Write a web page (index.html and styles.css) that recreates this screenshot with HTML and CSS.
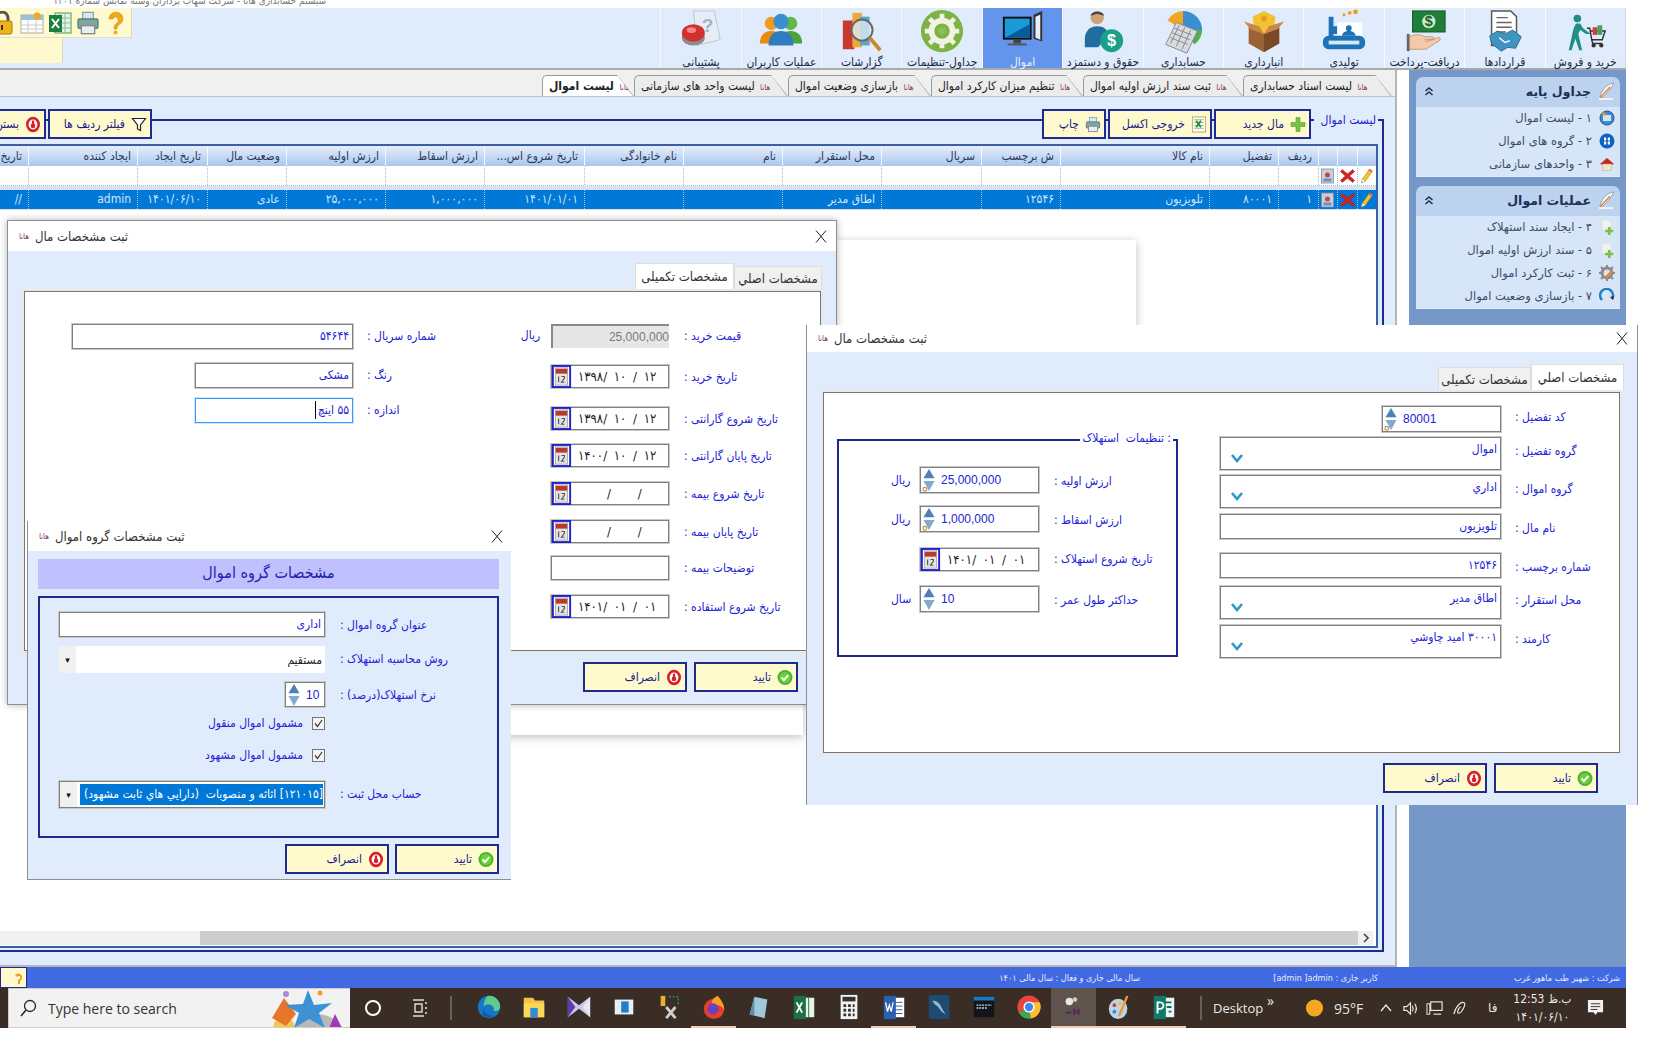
FILE: index.html
```html
<!DOCTYPE html>
<html lang="fa">
<head>
<meta charset="utf-8">
<title>سیستم حسابداری هانا</title>
<link rel="stylesheet" href="styles.css">
</head>
<body>
<svg class="defs" xmlns="http://www.w3.org/2000/svg">
  <symbol id="cal" viewBox="0 0 20 24"><rect x="1" y="1" width="18" height="22" fill="#fff" stroke="#2222cc" stroke-width="2"/><rect x="3.5" y="3" width="13" height="18" fill="#e4e4e4" stroke="#888" stroke-width=".6"/><rect x="4" y="4" width="12" height="5" fill="#b83a2a"/><path d="M7 12v6M10 12h3v2l-3 4h3" stroke="#555" stroke-width="1.2" fill="none"/></symbol>
  <symbol id="spin" viewBox="0 0 14 26"><path d="M7 1l6 10H1z" fill="#4f7fb8"/><path d="M1 14h12L7 25z" fill="#86a9cf"/></symbol>
  <symbol id="spino" viewBox="0 0 14 26"><path d="M7 1l6 10H1z" fill="#4f7fb8"/><path d="M1 14h12L7 25z" fill="#86a9cf"/><circle cx="2.500" cy="23" r="2" fill="#fff" stroke="#c08a3a" stroke-width="1.200"/></symbol>
  <symbol id="ok" viewBox="0 0 16 16"><circle cx="8" cy="8" r="7.5" fill="#49b52d"/><circle cx="8" cy="8" r="5.5" fill="#6fce3e"/><path d="M4.5 8l2.4 2.6 4.4-5" stroke="#fff" stroke-width="2" fill="none"/></symbol>
  <symbol id="no" viewBox="0 0 16 16"><ellipse cx="8" cy="8" rx="7" ry="7.8" fill="#d6202a"/><ellipse cx="8" cy="8" rx="4.4" ry="5" fill="#fff"/><path d="M8 4v4" stroke="#d6202a" stroke-width="2.2"/><circle cx="8" cy="9.4" r="2.3" fill="#d6202a"/></symbol>
  <symbol id="plus" viewBox="0 0 16 16"><path d="M6 1h4v5h5v4h-5v5H6v-5H1V6h5z" fill="#7ac143" stroke="#5a9c2a" stroke-width=".6"/></symbol>
  <symbol id="xls" viewBox="0 0 16 18"><rect x="1" y="1" width="14" height="16" fill="#fdfbe8" stroke="#b7a97a"/><path d="M3 4h10M3 7h10M3 10h10M3 13h10" stroke="#8fb78f"/><path d="M5 5l5 7M10 5l-5 7" stroke="#1f8a3c" stroke-width="1.8"/></symbol>
  <symbol id="prn" viewBox="0 0 18 18"><rect x="5" y="1" width="8" height="6" fill="#dce6f0" stroke="#8aa"/><rect x="1.500" y="6" width="15" height="7" rx="1" fill="#7fa7a0" stroke="#5a8078"/><rect x="4" y="11" width="10" height="6" fill="#e9eef2" stroke="#889"/></symbol>
  <symbol id="funnel" viewBox="0 0 16 16"><path d="M1.500 2h13L9.500 8.500V14l-3-1.500v-4z" fill="#fff" stroke="#222" stroke-width="1.200"/></symbol>
  <symbol id="pen" viewBox="0 0 14 16"><path d="M10 1l3 2-7 10-4 2 1-4z" fill="#f4c430" stroke="#b88a10" stroke-width=".6"/><path d="M2 15l1-4 3 2z" fill="#fff" stroke="#888" stroke-width=".4"/><path d="M10 1l3 2-1 1.500-3-2z" fill="#e2704a"/></symbol>
  <symbol id="redx" viewBox="0 0 14 14"><path d="M2 1l5 4 5-4 1.500 2L9 7l4.500 4L12 13 7 9l-5 4-1.500-2L5 7 .5 3z" fill="#d8201f" stroke="#901010" stroke-width=".4"/></symbol>
  <symbol id="thumb" viewBox="0 0 14 16"><rect x="1" y="1" width="12" height="14" fill="#c7cfdc" stroke="#7f8aa0" stroke-width=".8"/><circle cx="7" cy="7" r="2.500" fill="#c9473d"/><rect x="3" y="10.500" width="8" height="3" fill="#6e8fc0"/></symbol>
  <symbol id="chev" viewBox="0 0 14 12"><path d="M2 3l5 6 5-6" stroke="#2c97c9" stroke-width="2.600" fill="none"/></symbol>
  <symbol id="feather" viewBox="0 0 18 18"><path d="M17 1C9 2 5 8 3 15l2 1C9 12 14 7 17 1z" fill="#f8f8f4" stroke="#8a94a8" stroke-width=".8"/><path d="M13 5L3 16" stroke="#d88a3a" stroke-width="1.400"/><path d="M2 17h14" stroke="#fff" stroke-width="1.500"/></symbol>
  <symbol id="dbl" viewBox="0 0 10 10"><path d="M1.500 5l3.500-3 3.500 3M1.500 9l3.500-3 3.500 3" stroke="#1d2f55" stroke-width="1.500" fill="none"/></symbol>
  <symbol id="docplus" viewBox="0 0 18 18"><path d="M3 1h8l3 3v9H3z" fill="#f0f0f0" stroke="#ddd"/><path d="M10 9h3v3h3v3h-3v3h-3v-3H7v-3h3z" fill="#7ac143"/></symbol>
</svg>

<div class="app">
  <div class="apptitle">سیستم حسابداری هانا - شرکت شهاب پردازان وسته نمایش شماره ۱۴۰۱</div>

  <header class="toolbar">
    <div class="quick">
      <div class="quick-top">
        <svg class="q lock" viewBox="0 0 22 24"><path d="M5 11V7a6 6 0 0 1 12 0v4" fill="none" stroke="#555" stroke-width="3"/><rect x="1" y="10" width="20" height="13" rx="2" fill="#f0b418" stroke="#a87a10"/><rect x="10" y="14" width="2" height="5" fill="#333"/></svg>
        <svg class="q" viewBox="0 0 24 22"><rect x="1" y="3" width="22" height="18" fill="#fff" stroke="#aaa"/><rect x="1" y="3" width="22" height="5" fill="#9dc0d8"/><path d="M1 13h22M1 17h22M8 8v13M16 8v13" stroke="#ccc"/><circle cx="17" cy="4" r="3.500" fill="#f5a623"/></svg>
        <svg class="q" viewBox="0 0 24 24"><rect x="7" y="2" width="16" height="20" fill="#e8f3e8" stroke="#4a9a5a"/><path d="M12 2v20M17 2v20M7 7h16M7 12h16M7 17h16" stroke="#86c196"/><rect x="1" y="4" width="13" height="17" fill="#1f7f3f"/><path d="M4 8l7 9M11 8l-7 9" stroke="#fff" stroke-width="2"/></svg>
        <svg class="q" viewBox="0 0 18 18"><use href="#prn"/></svg>
        <svg class="q" viewBox="0 0 20 24"><path d="M3 8a7 6.500 0 1 1 11 5c-2 1.500-3 2.500-3 5H8c0-4 1.500-5 3.500-6.500C13 10 12 6 9.500 6 8 6 7 7 7 8z" fill="#f2a81d" stroke="#c58410" stroke-width=".5"/><circle cx="9.500" cy="21.500" r="2" fill="#f2a81d"/></svg>
      </div>
      <div class="quick-sub"></div>
    </div>
    <nav class="tools">
      <a class="tool"><svg class="ticon" viewBox="0 0 48 48"><circle cx="16" cy="10" r="4" fill="#1f8f83"/><path d="M15 15c-3 3-4 10-5 15l-3 13h3l4-12 4 12h3l-4-17 2-4 6 4h5l-8-6-3-5z" fill="#1f8f83"/><path d="M26 20h3l2 12h11l3-9H30" fill="none" stroke="#333" stroke-width="1.500"/><rect x="32" y="19" width="5" height="8" fill="#c8423a"/><rect x="37" y="17" width="5" height="10" fill="#45a35a"/><circle cx="33" cy="38" r="2.200" fill="#333"/><circle cx="41" cy="38" r="2.200" fill="#333"/><path d="M31 32l1 4h10" fill="none" stroke="#333" stroke-width="1.500"/></svg><span>خرید و فروش</span></a>
      <a class="tool"><svg class="ticon" viewBox="0 0 48 48"><path d="M10 2h20l6 6v30H10z" fill="#fff" stroke="#555" stroke-width="1.500"/><path d="M15 9h12M15 14h16M15 19h16M15 24h10" stroke="#666" stroke-width="1.500"/><path d="M8 28l8-5 8 3 8-4 9 7-6 12-8-1-7 4-10-8z" fill="#3f94c0" stroke="#2a6d95"/><path d="M18 30l6 5 5-2" stroke="#fff" stroke-width="1.500" fill="none"/></svg><span>قراردادها</span></a>
      <a class="tool"><svg class="ticon" viewBox="0 0 48 48"><rect x="11" y="2" width="34" height="22" fill="#1f7f3a" stroke="#0f5a25"/><circle cx="28" cy="13" r="7" fill="#cfe8c8"/><text class="dollar" x="28" y="18">$</text><path d="M5 26h3v18H5z" fill="#666"/><path d="M8 29c6-3 11-3 16 0h8c2 0 2 3 0 3h-8l1 2 12-4c3-1 4 2 2 3l-14 9H8z" fill="#f3c9a8" stroke="#b98a68" stroke-width=".8"/></svg><span>دریافت-پرداخت</span></a>
      <a class="tool"><svg class="ticon" viewBox="0 0 48 48"><circle cx="30" cy="4" r="2" fill="#e8a020"/><circle cx="36" cy="3" r="2.500" fill="#e8a020"/><circle cx="24" cy="6" r="1.600" fill="#e8a020"/><path d="M8 8h5v24H8zM13 18h4v8h-4z" fill="#1d72b8"/><rect x="17" y="14" width="26" height="14" fill="#fff"/><circle cx="29" cy="20" r="3" fill="#1d72b8"/><path d="M22 28c0-3 3-5 7-5s7 2 7 5z" fill="#1d72b8"/><rect x="2" y="28" width="44" height="14" rx="6" fill="#1d72b8"/><rect x="8" y="33" width="32" height="4" fill="#d7e8f5"/></svg><span>تولیدی</span></a>
      <a class="tool"><svg class="ticon" viewBox="0 0 48 48"><path d="M8 18l16 7v20L8 36z" fill="#9a6236"/><path d="M40 18l-16 7v20l16-9z" fill="#7a4a26"/><path d="M12 8l12-6 12 6-2 14-10 4-10-4z" fill="#f2c230"/><path d="M3 13l7 8 14 5-5-8zM45 13l-7 8-14 5 5-8z" fill="#c9894c"/><circle cx="24" cy="10" r="3" fill="#e69a20"/></svg><span>انبارداری</span></a>
      <a class="tool"><svg class="ticon" viewBox="0 0 48 48"><path d="M24 2a20 20 0 0 1 20 20H24z" fill="#3a8fd0"/><path d="M24 2A20 20 0 0 0 8 12l16 10z" fill="#f2a51e"/><path d="M44 22a20 20 0 0 1-8 15L24 22z" fill="#4fb04f"/><path d="M17 14l22 9-11 23-22-9z" fill="#d8dadf" stroke="#888"/><path d="M15 20l18 7M13 25l18 7M11 30l18 7M20 17l-9 19M26 19l-9 20M32 22l-9 20" stroke="#888"/></svg><span>حسابداری</span></a>
      <a class="tool"><svg class="ticon" viewBox="0 0 48 48"><circle cx="18" cy="9" r="7" fill="#d0a278"/><path d="M11 7c1-5 13-6 14 0l-7-2z" fill="#444"/><path d="M5 32c0-9 5-14 13-14s11 4 11 10l-10 12H5z" fill="#1f6e9f"/><circle cx="33" cy="33" r="12" fill="#18a08a"/><text class="dollar wh" x="33" y="38.500">$</text></svg><span>حقوق و دستمزد</span></a>
      <a class="tool on"><svg class="ticon" viewBox="0 0 48 48"><rect x="3" y="8" width="30" height="24" fill="#111"/><rect x="5" y="10" width="26" height="20" fill="#1a9bd8"/><path d="M5 30l26-14v14z" fill="#0b5a9a"/><path d="M35 6l9-4v32l-9-3z" fill="#333"/><path d="M37 8l5-2v26l-5-2z" fill="#e8eef4"/><rect x="14" y="32" width="8" height="4" fill="#444"/><rect x="8" y="36" width="20" height="2" fill="#555"/></svg><span>اموال</span></a>
      <a class="tool"><svg class="ticon" viewBox="0 0 48 48"><circle cx="24" cy="23" r="22" fill="#7cb342"/><circle cx="24" cy="23" r="11" fill="none" stroke="#f2f2e4" stroke-width="6"/><path d="M24 5v6M24 35v6M6 23h6M36 23h6M11 10l4 4M33 32l4 4M37 10l-4 4M15 32l-4 4" stroke="#f2f2e4" stroke-width="5"/><circle cx="24" cy="23" r="4" fill="#8dbf58"/></svg><span>جداول-تنظیمات</span></a>
      <a class="tool"><svg class="ticon" viewBox="0 0 48 48"><rect x="4" y="12" width="12" height="30" fill="#c8382e"/><rect x="14" y="4" width="10" height="36" fill="#f0a83a"/><rect x="22" y="8" width="10" height="30" fill="#5aa6c8"/><circle cx="24" cy="22" r="11" fill="#dce9f4" fill-opacity=".8" stroke="#666" stroke-width="2"/><path d="M32 30l11 13" stroke="#c9882e" stroke-width="4"/></svg><span>گزارشات</span></a>
      <a class="tool"><svg class="ticon" viewBox="0 0 48 48"><circle cx="14" cy="15" r="7" fill="#f09a20"/><path d="M2 36c0-9 5-13 12-13s12 4 12 13z" fill="#e88a10"/><circle cx="34" cy="15" r="7" fill="#5fb84a"/><path d="M22 36c0-9 5-13 12-13s12 4 12 13z" fill="#4aa438"/><circle cx="24" cy="13" r="8" fill="#3a8fd0"/><path d="M11 38c0-11 6-15 13-15s13 4 13 15z" fill="#2f7cc0"/></svg><span>عملیات کاربران</span></a>
      <a class="tool"><svg class="ticon" viewBox="0 0 48 48"><path d="M16 2h22l6 30-24 6z" fill="#e6edf4" stroke="#b9c6d4"/><text class="qmark" x="31" y="24">?</text><ellipse cx="16" cy="30" rx="12" ry="8" fill="#8d8d8d"/><ellipse cx="16" cy="25" rx="12" ry="9" fill="#d32f2f"/><ellipse cx="14" cy="22" rx="5" ry="3" fill="#f08a80"/></svg><span>پشتیبانی</span></a>
    </nav>
  </header>

  <div class="workspace">
    <main class="main">
      <div class="tabstrip">
        <div class="tab"><span class="mini">هانا</span> لیست اسناد حسابداری</div>
        <div class="tab"><span class="mini">هانا</span> ثبت سند ارزش اولیه اموال</div>
        <div class="tab"><span class="mini">هانا</span> تنظیم میزان کارکرد اموال</div>
        <div class="tab"><span class="mini">هانا</span> بازسازی وضعیت اموال</div>
        <div class="tab"><span class="mini">هانا</span> لیست واحد های سازمانی</div>
        <div class="tab active"><span class="mini">هانا</span> لیست اموال</div>
      </div>
      <div class="content">
        <section class="group">
          <div class="actions">
            <span class="legend">لیست اموال</span>
            <button class="btn b-new"><svg class="bi"><use href="#plus"/></svg>مال جدید</button>
            <button class="btn b-xls"><svg class="bi"><use href="#xls"/></svg>خروجی اکسل</button>
            <button class="btn b-prn"><svg class="bi"><use href="#prn"/></svg>چاپ</button>
            <span class="grow"></span>
            <button class="btn b-flt"><svg class="bi"><use href="#funnel"/></svg>فیلتر ردیف ها</button>
            <button class="btn b-cls"><svg class="bi"><use href="#no"/></svg>بستن</button>
          </div>
          <div class="grid">
            <div class="row head">
              <i></i><i></i><i></i><i>ردیف</i><i>تفضیل</i><i>نام کالا</i><i>ش برچسب</i><i>سریال</i><i>محل استقرار</i><i>نام</i><i>نام خانوادگی</i><i>تاریخ شروع اس...</i><i>ارزش اسقاط</i><i>ارزش اولیه</i><i>وضعیت مال</i><i>تاریخ ایجاد</i><i>ایجاد کننده</i><i>تاریخ</i>
            </div>
            <div class="row filter">
              <i><svg class="ri"><use href="#pen"/></svg></i><i><svg class="ri"><use href="#redx"/></svg></i><i><svg class="ri"><use href="#thumb"/></svg></i><i></i><i></i><i></i><i></i><i></i><i></i><i></i><i></i><i></i><i></i><i></i><i></i><i></i><i></i><i></i>
            </div>
            <div class="rowgap"></div>
            <div class="row sel">
              <i><svg class="ri"><use href="#pen"/></svg></i><i><svg class="ri"><use href="#redx"/></svg></i><i><svg class="ri"><use href="#thumb"/></svg></i><i>۱</i><i>۸۰۰۰۱</i><i>تلویزیون</i><i>۱۲۵۴۶</i><i></i><i>اطاق مدیر</i><i></i><i></i><i>۱۴۰۱/۰۱/۰۱</i><i>۱,۰۰۰,۰۰۰</i><i>۲۵,۰۰۰,۰۰۰</i><i>عادی</i><i>۱۴۰۱/۰۶/۱۰</i><i>admin</i><i>//</i>
            </div>
            <div class="gridfill"></div>
            <div class="hscroll">
              <span class="sb-track"></span><span class="sb-thumb"></span>
              <span class="sb-arrow"><svg viewBox="0 0 8 10" class="sb-ic"><path d="M2 1l4 4-4 4" fill="none" stroke="#444" stroke-width="1.600"/></svg></span>
            </div>
          </div>
        </section>
      </div>
    </main>

    <aside class="side">
      <section class="sp">
        <h3 class="sp-h"><svg class="sp-f"><use href="#feather"/></svg><span>جداول پایه</span><svg class="sp-d"><use href="#dbl"/></svg></h3>
        <ul class="sp-b">
          <li><svg class="sp-i" viewBox="0 0 16 16"><circle cx="8" cy="8" r="7" fill="#3c8bd0" stroke="#234f88"/><rect x="4" y="5" width="8" height="6" fill="#cfe6f8"/><path d="M3 3l4 2" stroke="#e8a020" stroke-width="2"/></svg>۱ - لیست اموال</li>
          <li><svg class="sp-i" viewBox="0 0 16 16"><circle cx="8" cy="8" r="7.500" fill="#0a63c4"/><rect x="5" y="4.500" width="2.200" height="3" fill="#fff"/><rect x="8.800" y="4.500" width="2.200" height="3" fill="#fff"/><rect x="5" y="8.500" width="2.200" height="3" fill="#fff"/><rect x="8.800" y="8.500" width="2.200" height="3" fill="#fff"/></svg>۲ - گروه های اموال</li>
          <li><svg class="sp-i" viewBox="0 0 16 16"><path d="M1 8l7-6 7 6-3 1H4z" fill="#c8281f"/><rect x="3.500" y="8" width="9" height="6.500" fill="#f2e4c4" stroke="#aa9" stroke-width=".5"/></svg>۳ - واحدهای سازمانی</li>
        </ul>
      </section>
      <section class="sp">
        <h3 class="sp-h"><svg class="sp-f"><use href="#feather"/></svg><span>عملیات اموال</span><svg class="sp-d"><use href="#dbl"/></svg></h3>
        <ul class="sp-b">
          <li><svg class="sp-i"><use href="#docplus"/></svg>۴ - ایجاد سند استهلاک</li>
          <li><svg class="sp-i"><use href="#docplus"/></svg>۵ - سند ارزش اولیه اموال</li>
          <li><svg class="sp-i" viewBox="0 0 16 16"><circle cx="8" cy="8" r="5" fill="none" stroke="#8a8a8a" stroke-width="3"/><path d="M8 0v3M8 13v3M0 8h3M13 8h3M2 2l2 2M12 12l2 2M14 2l-2 2M4 12l-2 2" stroke="#8a8a8a" stroke-width="2"/><path d="M6 12l6-7 2 1-6 8z" fill="#e8852a"/></svg>۶ - ثبت کارکرد اموال</li>
          <li><svg class="sp-i" viewBox="0 0 16 16"><path d="M3 12A6.500 6.500 0 1 1 13 11" fill="none" stroke="#1d7fbf" stroke-width="2.400"/><path d="M11 9l3 3 1-4z" fill="#333"/></svg>۷ - بازسازی وضعیت اموال</li>
        </ul>
      </section>
    </aside>
  </div>

  <footer class="status">
    <span class="st-btn"><svg viewBox="0 0 14 14" class="st-ic"><path d="M3 4a4 4 0 1 1 5 6v3H6V9c3-1 3-4 1-4-1 0-2 .5-2 1z" fill="#f0a020"/></svg></span>
    <span class="st st-year">سال مالی جاری و فعال : سال مالی ۱۴۰۱</span>
    <span class="st st-user">کاربر جاری : admin ]admin]</span>
    <span class="st st-co">شرکت : شهیر طب ماهور غرب</span>
  </footer>

  <div class="taskbar">
    <div class="search">
      <svg class="mag" viewBox="0 0 18 18"><circle cx="11" cy="7" r="5.500" fill="none" stroke="#222" stroke-width="1.300"/><path d="M7 11l-5 6" stroke="#222" stroke-width="1.500"/></svg>
      <span class="s-text">Type here to search</span>
      <svg class="star" viewBox="0 4 80 40"><circle cx="14" cy="44" r="11" fill="#f2c84a"/><path d="M2 34l12-20 12 16-10 12z" fill="#e8752a"/><ellipse cx="46" cy="40" rx="20" ry="10" fill="#b8b8b8"/><path d="M38 6l6 15 18-2-13 10 6 15-16-9-15 9 5-15-14-8 18-1z" fill="#3c92d4"/><circle cx="50" cy="9" r="2.500" fill="#f2a020"/><circle cx="16" cy="10" r="3" fill="#a888e0"/><path d="M60 42l5-12 6 12 3 4H60z" fill="#a038b8"/></svg>
    </div>
    <span class="tb-sys tb-c"><svg viewBox="0 0 20 20" class="ti"><circle cx="10" cy="10" r="7" fill="none" stroke="#fff" stroke-width="2"/></svg></span>
    <span class="tb-sys tb-v"><svg viewBox="0 0 20 20" class="ti"><path d="M3 2h11M3 18h11M5 6h7v8H5z" fill="none" stroke="#ddd" stroke-width="1.400"/><path d="M16 4v2M16 9v2M16 14v2" stroke="#ddd" stroke-width="1.600"/></svg></span>
    <span class="tb-sep"></span>
    <span class="tb-i"><svg viewBox="0 0 28 28" class="ti2"><circle cx="14" cy="14" r="12" fill="#1477c8"/><path d="M14 2a12 12 0 0 1 12 12c0 4-4 5-7 4 2-6-6-9-11-5 1-6 3-11 6-11z" fill="#5ecb8a"/><path d="M8 14c0 6 5 10 11 9-3 3-9 3-12-1" fill="#0e5ca8"/></svg></span>
    <span class="tb-i"><svg viewBox="0 0 28 28" class="ti2"><path d="M3 4h10l2 3h10v18H3z" fill="#f5c542"/><rect x="3" y="10" width="22" height="15" fill="#fbd75b"/><rect x="10" y="15" width="8" height="10" fill="#2a8fd8"/></svg></span>
    <span class="tb-i"><svg viewBox="0 0 28 28" class="ti2"><path d="M2 3l12 9 12-9v22l-12-9-12 9z" fill="#c9c9e8"/><path d="M2 3l8 11-8 11z" fill="#5b3bb0"/><path d="M26 3l-8 11 8 11z" fill="#e8e8f4"/></svg></span>
    <span class="tb-i"><svg viewBox="0 0 28 28" class="ti2"><rect x="4" y="6" width="20" height="16" fill="#e9eef2"/><rect x="11" y="8" width="8" height="12" fill="#1b7fd0"/></svg></span>
    <span class="tb-i"><svg viewBox="0 0 28 28" class="ti2"><rect x="5" y="2" width="5" height="11" fill="#e8b030"/><path d="M14 3h10v10" fill="none" stroke="#2e9a4a" stroke-dasharray="2 2" stroke-width="1.600"/><path d="M11 14l10 12M21 14l-10 12" stroke="#cfcfcf" stroke-width="3"/></svg></span>
    <span class="tb-i run"><svg viewBox="0 0 28 28" class="ti2"><circle cx="14" cy="16" r="11" fill="#e6402a"/><path d="M18 2c5 6 7 10 7 15-3-5-8-6-11-4-4-2-3-8 4-11z" fill="#f5a023"/><circle cx="13" cy="16" r="6" fill="#6d3fc4"/></svg></span>
    <span class="tb-i"><svg viewBox="0 0 28 28" class="ti2"><path d="M9 3l14 3-3 20-16-4z" fill="#9fc8d8"/><path d="M9 3L4 22l5 1z" fill="#5d8fa8"/></svg></span>
    <span class="tb-i"><svg viewBox="0 0 28 28" class="ti2"><rect x="10" y="4" width="15" height="21" fill="#e8f3ec"/><path d="M14 4v21M19 4v21" stroke="#217346"/><rect x="3" y="2" width="13" height="25" fill="#1d7044"/><path d="M6 9l6 11M12 9L6 20" stroke="#fff" stroke-width="2"/></svg></span>
    <span class="tb-i"><svg viewBox="0 0 28 28" class="ti2"><rect x="5" y="1" width="18" height="26" fill="#f4f4f4"/><rect x="7" y="3" width="14" height="5" fill="#333"/><path d="M8 11h3v3H8zM13 11h3v3h-3zM18 11h2v3h-2zM8 16h3v3H8zM13 16h3v3h-3zM18 16h2v3h-2zM8 21h3v3H8zM13 21h3v3h-3zM18 21h2v3h-2z" fill="#333"/></svg></span>
    <span class="tb-i run"><svg viewBox="0 0 28 28" class="ti2"><rect x="10" y="4" width="15" height="21" fill="#fff"/><path d="M13 9h10M13 13h10M13 17h10M13 21h10" stroke="#2b5797"/><rect x="3" y="2" width="13" height="25" fill="#2b5fad"/><path d="M5 9l2 10 2-7 2 7 2-10" fill="none" stroke="#fff" stroke-width="1.400"/></svg></span>
    <span class="tb-i"><svg viewBox="0 0 28 28" class="ti2"><rect x="3" y="1" width="22" height="26" rx="2" fill="#1f4a72"/><path d="M7 7c5 0 8 3 10 8l4 7c-4-2-6-5-8-8-2-2-5-3-6-7z" fill="#8fb7d2"/></svg></span>
    <span class="tb-i"><svg viewBox="0 0 28 28" class="ti2"><rect x="3" y="3" width="22" height="22" fill="#11161c"/><rect x="3" y="3" width="22" height="4" fill="#1c78c4"/><path d="M6 12h16M6 15h12" stroke="#d8d8d8" stroke-width="1.500" stroke-dasharray="2 1"/></svg></span>
    <span class="tb-i"><svg viewBox="0 0 28 28" class="ti2"><circle cx="14" cy="14" r="12.500" fill="#e8453c"/><path d="M14 14L3 20a12.500 12.500 0 0 0 13 6.300z" fill="#3aa757"/><path d="M14 14l2 12.300A12.500 12.500 0 0 0 25.500 9H14z" fill="#fbc02d"/><circle cx="14" cy="14" r="6" fill="#fff"/><circle cx="14" cy="14" r="4.500" fill="#4285f4"/></svg></span>
    <span class="tb-i run hl"><svg viewBox="0 0 28 28" class="ti2"><circle cx="9" cy="8" r="4" fill="#e8e8e8"/><circle cx="15" cy="6" r="2.500" fill="#d8c8a8"/><path d="M5 20h6M14 16v6M19 16v6M14 19h5" stroke="#552a5a" stroke-width="2.400"/></svg></span>
    <span class="tb-i run"><svg viewBox="0 0 28 28" class="ti2"><ellipse cx="13" cy="16" rx="10" ry="11" fill="#bcd4e4"/><circle cx="9" cy="12" r="2" fill="#d63a2a"/><circle cx="15" cy="10" r="2" fill="#f0c030"/><circle cx="9" cy="19" r="2" fill="#2a8fd8"/><path d="M23 2l-9 22" stroke="#e89a3c" stroke-width="2.500"/></svg></span>
    <span class="tb-i run"><svg viewBox="0 0 28 28" class="ti2"><rect x="11" y="4" width="14" height="21" fill="#e8f5f0"/><path d="M15 9h7M17 14h5M19 19h3" stroke="#0f6a5c" stroke-width="2"/><rect x="3" y="2" width="13" height="25" fill="#0f7a66"/><path d="M7 21V9h3a3 3 0 0 1 0 7H7" fill="none" stroke="#fff" stroke-width="2"/></svg></span>
    <span class="tb-sep s2"></span>
    <span class="tb-desk">Desktop<em>»</em></span>
    <svg viewBox="0 0 20 20" class="tb-sun"><circle cx="10" cy="10" r="9" fill="#f5a623"/></svg>
    <span class="tb-temp">95°F</span>
    <svg viewBox="0 0 14 14" class="tb-tr"><path d="M2 10l5-6 5 6" fill="none" stroke="#eee" stroke-width="1.300"/></svg>
    <svg viewBox="0 0 18 18" class="tb-tr tr-w tr-s"><path d="M2 7h3l4-4v12l-4-4H2z" fill="none" stroke="#eee" stroke-width="1.200"/><path d="M11 6c1 2 1 4 0 6M13.500 4c2 3 2 7 0 10" fill="none" stroke="#eee" stroke-width="1.200"/></svg>
    <svg viewBox="0 0 18 18" class="tb-tr tr-w"><rect x="5" y="2" width="12" height="9" fill="none" stroke="#eee" stroke-width="1.200"/><rect x="1" y="4" width="3" height="11" fill="none" stroke="#eee"/><path d="M8 15h8" stroke="#eee" stroke-width="1.200"/></svg>
    <svg viewBox="0 0 18 18" class="tb-tr tr-w"><path d="M2 15C4 6 10 1 13 3c2 2-3 11-6 11-2 0-1-4 2-7" fill="none" stroke="#eee" stroke-width="1.200"/></svg>
    <span class="tb-lang">فا</span>
    <span class="tb-clock"><b>12:53 ب.ظ</b><b>۱۴۰۱/۰۶/۱۰</b></span>
    <svg viewBox="0 0 18 20" class="tb-note"><path d="M1 1h16v13H11l-2 3-2-3H1z" fill="#f2f2f2"/><path d="M4 5h10M4 8h10M4 11h7" stroke="#3a2d26"/></svg>
  </div>

  <div class="ghost g1"></div>
  <div class="ghost g2"></div>

  <!-- dialog 1: asset details, second tab -->
  <section class="win win-a">
    <div class="w-title"><span class="mini">هانا</span><span class="w-name">ثبت مشخصات مال</span><svg class="w-x" viewBox="0 0 12 12"><path d="M1 0l10 12M11 0L1 12" stroke="#222" stroke-width="1"/></svg></div>
    <div class="w-tabs">
      <span class="w-tab cur">مشخصات تکمیلی</span>
      <span class="w-tab w-wide">مشخصات اصلي</span>
    </div>
    <div class="panel p1">
      <div class="colA">
        <div class="box wfull val">۵۴۶۴۴</div><label class="lbl">شماره سریال :</label>
        <div class="box w158 val">مشکی</div><label class="lbl">رنگ :</label>
        <div class="box w158 val focus"><span class="txt">۵۵ اینچ</span><span class="caret"></span></div><label class="lbl">اندازه :</label>
      </div>
      <div class="colB">
        <span class="unit">ریال</span><div class="box dis">25,000,000</div><label class="lbl">قیمت خرید :</label>
        <span></span><div class="box date"><svg class="cal"><use href="#cal"/></svg><span>۱۳۹۸/ ۱۰ / ۱۲</span></div><label class="lbl">تاریخ خرید :</label>
        <span></span><div class="box date"><svg class="cal"><use href="#cal"/></svg><span>۱۳۹۸/ ۱۰ / ۱۲</span></div><label class="lbl">تاریخ شروع گارانتی :</label>
        <span></span><div class="box date"><svg class="cal"><use href="#cal"/></svg><span>۱۴۰۰/ ۱۰ / ۱۲</span></div><label class="lbl">تاریخ پایان گارانتی :</label>
        <span></span><div class="box date"><svg class="cal"><use href="#cal"/></svg><span class="blank">/ &nbsp; &nbsp;/</span></div><label class="lbl">تاریخ شروع بیمه :</label>
        <span></span><div class="box date"><svg class="cal"><use href="#cal"/></svg><span class="blank">/ &nbsp; &nbsp;/</span></div><label class="lbl">تاریخ پایان بیمه :</label>
        <span></span><div class="box"></div><label class="lbl">توضیحات بیمه :</label>
        <span></span><div class="box date"><svg class="cal"><use href="#cal"/></svg><span>۱۴۰۱/ ۰۱ / ۰۱</span></div><label class="lbl">تاریخ شروع استفاده :</label>
      </div>
    </div>
    <div class="w-foot f1">
      <button class="btn b-dlg"><svg class="bi"><use href="#no"/></svg>انصراف</button>
      <button class="btn b-dlg"><svg class="bi"><use href="#ok"/></svg>تایید</button>
    </div>
  </section>

  <!-- dialog 2: asset details, first tab -->
  <section class="win win-b">
    <div class="w-title tb2"><span class="mini">هانا</span><span class="w-name">ثبت مشخصات مال</span><svg class="w-x" viewBox="0 0 12 12"><path d="M1 0l10 12M11 0L1 12" stroke="#222" stroke-width="1"/></svg></div>
    <div class="w-tabs t2">
      <span class="w-tab">مشخصات تکمیلی</span>
      <span class="w-tab cur w-wide">مشخصات اصلي</span>
    </div>
    <div class="panel p2">
      <fieldset class="dep">
        <span class="dep-leg">: تنظیمات&nbsp; استهلاک</span>
        <span class="unit">ریال</span><div class="box num spinbox"><svg class="spin"><use href="#spino"/></svg>25,000,000</div><label class="lbl">ارزش اولیه :</label>
        <span class="unit">ریال</span><div class="box num spinbox"><svg class="spin"><use href="#spino"/></svg>1,000,000</div><label class="lbl">ارزش اسقاط :</label>
        <span></span><div class="box date"><svg class="cal"><use href="#cal"/></svg><span>۱۴۰۱/ ۰۱ / ۰۱</span></div><label class="lbl lbl-d">تاریخ شروع استهلاک :</label>
        <span class="unit">سال</span><div class="box num spinbox"><svg class="spin"><use href="#spin"/></svg>10</div><label class="lbl">حداکثر طول عمر :</label>
      </fieldset>
      <div class="colC">
        <div class="box num spinbox w119"><svg class="spin"><use href="#spino"/></svg>80001</div><label class="lbl">کد تفضیل :</label>
        <div class="box combo val">اموال<svg class="chev"><use href="#chev"/></svg></div><label class="lbl">گروه تفضیل :</label>
        <div class="box combo val">اداري<svg class="chev"><use href="#chev"/></svg></div><label class="lbl">گروه اموال :</label>
        <div class="box val">تلویزیون</div><label class="lbl">نام مال :</label>
        <div class="box val">۱۲۵۴۶</div><label class="lbl">شماره برچسب :</label>
        <div class="box combo val">اطاق مدیر<svg class="chev"><use href="#chev"/></svg></div><label class="lbl">محل استقرار :</label>
        <div class="box combo val">۳۰۰۰۱ امید چاوشي<svg class="chev"><use href="#chev"/></svg></div><label class="lbl">کارمند :</label>
      </div>
    </div>
    <div class="w-foot f2">
      <button class="btn b-dlg"><svg class="bi"><use href="#no"/></svg>انصراف</button>
      <button class="btn b-dlg"><svg class="bi"><use href="#ok"/></svg>تایید</button>
    </div>
  </section>

  <!-- dialog 3: asset group -->
  <section class="win win-c">
    <div class="w-title t3"><span class="mini">هانا</span><span class="w-name">ثبت مشخصات گروه اموال</span><svg class="w-x" viewBox="0 0 12 12"><path d="M1 0l10 12M11 0L1 12" stroke="#222" stroke-width="1"/></svg></div>
    <div class="w3-bar">مشخصات گروه اموال</div>
    <div class="w3-box">
      <div class="box val">اداری</div><label class="lbl">عنوان گروه اموال :</label>
      <div class="plain"><span class="drop">▾</span><span class="plain-t">مستقیم</span></div><label class="lbl">روش محاسبه استهلاک :</label>
      <div class="box num spinbox w40"><svg class="spin"><use href="#spin"/></svg>10</div><label class="lbl">نرخ استهلاک(درصد) :</label>
      <div class="chk"><span class="chk-t">مشمول اموال منقول</span><svg class="chk-b" viewBox="0 0 13 13"><rect x=".5" y=".5" width="12" height="12" fill="#f4f4f4" stroke="#777"/><path d="M3 6.500l2.500 3L10 3" fill="none" stroke="#333" stroke-width="1.200"/></svg></div><span></span>
      <div class="chk"><span class="chk-t">مشمول اموال مشهود</span><svg class="chk-b" viewBox="0 0 13 13"><rect x=".5" y=".5" width="12" height="12" fill="#f4f4f4" stroke="#777"/><path d="M3 6.500l2.500 3L10 3" fill="none" stroke="#333" stroke-width="1.200"/></svg></div><span></span>
      <div class="box acct"><span class="drop">▾</span><span class="acct-t">[۱۲۱۰۱۵] اثاثه و منصوبات&nbsp; (دارايي هاي ثابت مشهود)</span></div><label class="lbl">حساب محل ثبت :</label>
    </div>
    <div class="w-foot f3">
      <button class="btn b-dlg"><svg class="bi"><use href="#no"/></svg>انصراف</button>
      <button class="btn b-dlg"><svg class="bi"><use href="#ok"/></svg>تایید</button>
    </div>
  </section>
</div>
</body>
</html>
```

FILE: styles.css
```css
* { box-sizing: border-box; }
html, body { margin: 0; height: 100%; background: #fff; overflow: hidden; }
body { font: 12px "DejaVu Sans Condensed", "DejaVu Sans", sans-serif; color: #1a2a4a; }
.defs { position: absolute; width: 0; height: 0; }
button { font: inherit; cursor: default; }
i { font-style: normal; }
ul { list-style: none; margin: 0; padding: 0; }

.app { position: relative; width: 1667px; height: 1042px; overflow: hidden; display: flex; flex-direction: column; align-items: flex-start; }
.apptitle { width: 1626px; height: 8px; overflow: hidden; font-size: 10px; line-height: 2px; color: #777; direction: rtl; text-align: right; padding-right: 1300px; white-space: nowrap; }

/* top toolbar */
.toolbar { width: 1626px; height: 62px; background: #e0ecfc; display: flex; justify-content: space-between; border-bottom: 2px solid #a9a9a9; }
.quick { display: flex; flex-direction: column; width: 132px; }
.quick-top { height: 30px; width: 132px; background: #fffacd; display: flex; align-items: center; gap: 4px; border-right: 1px solid #d8d8c0; border-bottom: 1px solid #ddd; }
.q { width: 24px; height: 24px; flex: none; }
.lock { margin: 0 3px 0 -9px; width: 22px; }
.quick-sub { width: 63px; height: 25px; background: #fffacd; border-right: 1px solid #d8d8c0; }
.tools { display: flex; direction: rtl; border-right: 1px solid #cfdcee; }
.tool { width: 80.4px; height: 60px; display: flex; flex-direction: column; align-items: center; border-left: 1px solid #f4f8ff; color: #1d2a45; }
.tool.on { background: #6495ed; color: #e8f0ff; }
.ticon { width: 46px; height: 46px; margin-top: 1px; flex: none; }
.tool span { font-size: 12px; line-height: 14px; white-space: nowrap; }
.dollar { font: bold 15px "Liberation Sans", sans-serif; text-anchor: middle; fill: #14622f; }
.dollar.wh { fill: #fff; font-size: 17px; }
.qmark { font: bold 20px "Liberation Sans", sans-serif; text-anchor: middle; fill: #9fb4cc; }

/* workspace */
.workspace { display: flex; gap: 12px; height: 897px; }
.main { width: 1397px; display: flex; flex-direction: column; border-right: 2px solid #b5b5b5; border-bottom: 2px solid #b5b5b5; }
.tabstrip { height: 27px; background: #f0f0f0; border-bottom: 1px solid #b8c4d0; display: flex; direction: rtl; align-items: flex-end; padding-right: 3px; flex: none; }
.tab { position: relative; height: 21px; background: #ececec; border: 1px solid #9a9a9a; border-bottom: none; border-right: none; border-radius: 5px 0 0 0; padding: 0 0 0 6px; line-height: 21px; text-align: left; direction: rtl; color: #222; white-space: nowrap; font-size: 12px; clip-path: polygon(0 0, calc(100% - 17px) 0, 100% 100%, 0 100%); }
.tab::before { content: ""; position: absolute; top: -1px; right: 16px; width: 1px; height: 22px; background: #9a9a9a; transform: skewX(37deg); transform-origin: top; }
.tab:nth-child(1) { width: 149px; }
.tab:nth-child(2) { width: 160px; }
.tab:nth-child(3) { width: 152px; }
.tab:nth-child(4) { width: 143px; }
.tab:nth-child(5) { width: 154px; }
.tab.active { width: 92px; background: #fff; font-weight: bold; }
.mini { font-size: 8px; color: #7a3a6a; font-weight: normal; margin: 0 2px; white-space: nowrap; }
.content { flex: 1; background: #e0ecfc; display: flex; min-height: 0; }

.group { margin: 22px 12px 13px -18px; width: 1402px; border: 2px solid #1f2a8f; border-left: none; padding: 0 4px 2px 0; display: flex; flex-direction: column; }
.actions { display: flex; direction: rtl; height: 30px; margin-top: -12px; align-items: stretch; gap: 2px; flex: none; }
.legend { width: 64px; background: #e0ecfc; color: #2222cc; margin: 0 0 8px 1px; padding-right: 2px; align-self: center; height: 18px; line-height: 18px; white-space: nowrap; }
.grow { flex: 1; }
.btn { display: flex; direction: rtl; align-items: center; gap: 6px; background: #fffacd; border: 2px solid #1f2a8f; color: #1a1a8c; padding: 0 3px; font-size: 12px; white-space: nowrap; height: 30px; }
.bi { width: 16px; height: 17px; flex: none; }
.b-new { width: 97px; }
.b-xls { width: 104px; }
.b-prn { width: 64px; }
.b-flt { width: 104px; }
.b-cls { width: 64px; }
.b-dlg { width: 104px; }

.grid { flex: 1; margin-top: 5px; border: 2px solid #3a5ea8; display: flex; flex-direction: column; background: #fff; min-height: 0; }
.row { display: grid; direction: rtl; grid-template-columns: 19px 20px 19px 40px 69px 149px 79px 100px 99px 99px 99px 100px 99px 99px 79px 70px 109px 46px; flex: none; height: 20px; }
.row i { overflow: hidden; white-space: nowrap; padding: 0 6px; line-height: 19px; font-size: 12px; border-left: 1px dotted #a8bcd8; display: flex; align-items: center; }
.head { background: linear-gradient(#e6eefa, #a9c6ee); color: #2b3a5c; }
.head i { border-left: 1px solid #f4f8ff; }
.filter { background: #fff; border-bottom: 1px dotted #a8bcd8; }
.rowgap { height: 4px; background: #d8e4f4; flex: none; }
.sel { background: #0078d7; color: #d4e6f8; border-bottom: 1px solid #cfe0f2; }
.row i:nth-child(-n+3) { padding: 0 2px; }
.ri { width: 15px; height: 16px; flex: none; }
.gridfill { flex: 1; background: #fff; }
.hscroll { height: 14px; display: flex; flex: none; margin: 0 3px 1px 0; }
.sb-track { width: 216px; background: #f0f0f0; }
.sb-thumb { flex: 1; background: #cdcdcd; }
.sb-arrow { width: 15px; background: #f0f0f0; display: flex; align-items: center; justify-content: center; }
.sb-ic { width: 8px; height: 10px; }

/* side */
.side { width: 217px; background: #7598c8; padding: 7px 6px 0 7px; display: flex; flex-direction: column; gap: 10px; direction: rtl; }
.sp-h { margin: 0; height: 30px; background: #bcd2ee; border-radius: 7px 7px 0 0; display: flex; align-items: center; padding: 0 5px 2px 8px; font: bold 12.5px "DejaVu Sans", sans-serif; color: #1e2e55; gap: 6px; }
.sp-h span { flex: 1; }
.sp-f { width: 18px; height: 18px; }
.sp-d { width: 10px; height: 10px; }
.sp-b { background: #d6e5f7; padding: 0 5px 0 0; box-shadow: 0 1px 0 #e4eefa; }
.sp-b li { height: 23px; display: flex; align-items: center; gap: 7px; padding-bottom: 2px; font: 11.5px "DejaVu Sans", sans-serif; color: #3b4a6b; white-space: nowrap; }
.sp-i { width: 16px; height: 16px; flex: none; }

/* status */
.status { width: 1626px; height: 21px; background: #4169e1; display: flex; align-items: center; color: #e6ecff; font-size: 9px; white-space: nowrap; }
.st-btn { width: 27px; height: 21px; background: #fffacd; border: 1px solid #1f2a8f; display: flex; align-items: center; justify-content: flex-end; }
.st-ic { width: 14px; height: 14px; }
.st { direction: rtl; }
.st-year { margin-left: 981px; width: 132px; }
.st-user { margin-left: 133px; width: 105px; }
.st-co { margin-left: 144px; width: 98px; }

/* taskbar */
.taskbar { width: 1626px; height: 40px; background: #3a2d26; display: flex; align-items: center; color: #e8e8e8; font-family: "Open Sans", sans-serif; padding-left: 8px; }
.search { width: 342px; height: 40px; background: #f2f2f2; border: 1px solid #cfcfcf; border-width: 1px 0 1px 1px; display: flex; align-items: center; flex: none; overflow: hidden; }
.mag { width: 18px; height: 18px; margin-left: 10px; flex: none; }
.s-text { font-size: 14px; color: #333; margin-left: 11px; flex: none; white-space: nowrap; }
.star { width: 80px; height: 40px; margin-left: auto; flex: none; }
.tb-sys { height: 40px; display: flex; align-items: center; justify-content: center; flex: none; }
.tb-c { width: 46px; }
.tb-v { width: 48px; }
.ti { width: 20px; height: 20px; }
.tb-sep { width: 2px; height: 24px; background: #6a5e58; margin: 0 14px 0 6px; flex: none; }
.tb-i { width: 45px; height: 40px; display: flex; align-items: center; justify-content: center; flex: none; border-bottom: 2px solid transparent; }
.ti2 { width: 26px; height: 26px; }
.run { border-bottom-color: #f5c9b5; }
.hl { background: #5e534d; }
.s2 { margin: 0 11px 0 14px; }
.tb-desk { font-size: 13px; width: 72px; flex: none; position: relative; }
.tb-desk em { font-style: normal; position: absolute; left: 54px; top: -8px; font-size: 14px; }
.tb-sun { width: 19px; height: 26px; margin-left: 20px; flex: none; }
.tb-temp { font-size: 14px; margin: 0 12px 0 10px; width: 33px; flex: none; white-space: nowrap; }
.tb-tr { width: 14px; height: 14px; margin-right: 9px; flex: none; }
.tr-w { width: 17px; height: 17px; }
.tr-s { margin-right: 7px; }
.tb-lang { font: 12px "DejaVu Sans", sans-serif; margin: 0 15px 0 10px; flex: none; direction: rtl; }
.tb-clock { display: flex; flex-direction: column; align-items: center; width: 60px; font: 12px "DejaVu Sans Condensed", sans-serif; line-height: 18px; flex: none; }
.tb-clock b { font-weight: normal; }
.tb-note { width: 17px; height: 19px; margin-left: 15px; flex: none; }

/* windows on the desktop */
.ghost { position: absolute; background: #fff; box-shadow: 0 2px 9px rgba(0, 0, 0, .25); }
.g1 { left: 300px; top: 240px; width: 836px; height: 200px; }
.g2 { left: 300px; top: 500px; width: 503px; height: 235px; }
.win { position: absolute; background: #e0ecfc; display: flex; flex-direction: column; border: 1px solid #8f8f8f; }
.win-a { left: 7px; top: 220px; width: 830px; height: 485px; box-shadow: 0 0 7px rgba(0, 0, 0, .3); }
.win-b { left: 806px; top: 325px; width: 832px; height: 480px; border-top: none; border-bottom: none; }
.win-c { left: 27px; top: 521px; width: 484px; height: 359px; border-top: none; border-right: none; }
.w-title { height: 30px; background: #fff; display: flex; align-items: center; padding: 0 9px 0 8px; gap: 3px; flex: none; color: #333; }
.tb2 { height: 27px; }
.t3 { padding-right: 8px; }
.w-title .mini { width: 16px; overflow: hidden; margin: 0; text-align: center; }
.w-name { direction: rtl; font-size: 13px; white-space: nowrap; }
.w-x { width: 12px; height: 13px; margin-left: auto; }
.w-tabs { display: flex; justify-content: flex-end; margin-top: 12px; height: 28px; padding-right: 14px; flex: none; align-items: flex-end; }
.t2 { padding-right: 13px; }
.w-tab { width: 93px; height: 25px; background: #f0f0f0; border: 1px solid #ddd; border-bottom: none; text-align: center; line-height: 24px; color: #333; white-space: nowrap; direction: rtl; font-size: 13px; }
.w-tab.cur { height: 28px; background: #fff; line-height: 25px; }
.win-a .w-tab { width: 99px; }
.win-a .w-wide { width: 88px; }
.panel { background: #fff; border: 1px solid #777; box-shadow: 0 0 0 2px #e8e8e8; display: flex; flex: none; }
.p1 { width: 797px; height: 360px; margin-left: 16px; padding: 32px 0 0 47px; }
.p2 { width: 797px; height: 361px; margin-left: 16px; padding: 13px 0 0 13px; }

.lbl { direction: rtl; text-align: left; white-space: nowrap; color: #2222d8; font-size: 12px; }
.box { background: #fff; border: 1px solid #808080; outline: 1px solid #c8c8c8; height: 25px; line-height: 22px; color: #2222d8; font-size: 12px; display: flex; align-items: center; }
.val { direction: rtl; padding: 0 3px; align-items: flex-start; }
.wfull { width: 281px; }
.w158 { width: 158px; justify-self: end; }
.focus { border-color: #3399ff; outline-color: #cfe6ff; }
.caret { width: 1px; height: 18px; background: #000; margin: 2px 2px 0 0; flex: none; }
.dis { background: #e6e6e6; border-top: 2px solid #888; border-left: 2px solid #888; border-right: none; border-bottom: none; outline: none; color: #7a7a7a; justify-content: flex-end; font: 12px "Liberation Sans", sans-serif; }
.date { height: 23px; color: #222; font-size: 13px; word-spacing: 3px; }
.date span { margin-left: 6px; white-space: nowrap; }
.date .blank { margin-left: 35px; }
.cal { width: 21px; height: 23px; margin: -1px 0 -1px -1px; flex: none; }
.unit { direction: rtl; color: #2222d8; font-size: 12px; white-space: nowrap; margin-top: 4px; }

.colA { width: 438px; display: grid; grid-template-columns: 281px 14px 143px; grid-template-rows: 39px 35px 25px; align-items: start; flex: none; align-self: flex-start; }
.colA .lbl { grid-column: 3; margin-top: 5px; }
.colA .box { grid-column: 1; }
.colB { display: grid; grid-template-columns: 41px 118px 125px; grid-template-rows: 41px 42px 37px 38px 38px 36px 39px 24px; align-items: start; flex: none; align-self: flex-start; }
.colB .lbl { margin-top: 5px; padding-left: 15px; }
.colB .unit { justify-self: center; }
.colB > .box { height: 24px; }
.colB > .date { height: 23px; }

.dep { position: relative; margin: 33px 0 0 0; padding: 26px 0 0 52px; width: 341px; height: 218px; min-width: 0; border: 2px solid #1f2a8f; display: grid; grid-template-columns: 29px 119px 130px; grid-template-rows: 39px 42px 38px 26px; align-items: start; align-content: start; flex: none; }
.dep .lbl { margin-top: 7px; padding-left: 15px; }
.dep .lbl-d { margin-top: 4px; }
.dep .unit { justify-self: start; margin-top: 6px; }
.dep-leg { position: absolute; top: -10px; right: 3px; background: #fff; padding: 0 2px 0 3px; color: #2222d8; direction: rtl; font-size: 12px; white-space: nowrap; }
.num { font: 12px "Liberation Sans", sans-serif; }
.spinbox { gap: 5px; padding-left: 1px; height: 26px; }
.spin { width: 14px; height: 24px; flex: none; }
.colC { margin-left: 42px; display: grid; width: 390px; grid-template-columns: 281px 14px 95px; grid-template-rows: 31px 38px 39px 39px 33px 39px 33px; align-items: start; flex: none; align-self: flex-start; }
.colC .lbl { grid-column: 3; margin-top: 7px; }
.colC .lbl:nth-child(2) { margin-top: 4px; }
.colC .box { grid-column: 1; }
.w119 { width: 119px; justify-self: end; }
.combo { height: 33px; position: relative; }
.chev { position: absolute; left: 9px; bottom: 5px; width: 14px; height: 12px; }

.w-foot { display: flex; justify-content: flex-end; gap: 7px; flex: none; }
.f1 { margin-top: 11px; padding-right: 38px; }
.f2 { margin-top: 10px; padding-right: 39px; }
.f3 { margin-top: 6px; padding-right: 12px; gap: 6px; }

.w3-bar { margin: 8px 12px 0 10px; height: 30px; background: #c0c0ff; color: #1f1fb0; text-align: center; direction: rtl; font-size: 16px; line-height: 28px; flex: none; }
.w3-box { margin: 7px 12px 0 10px; height: 242px; border: 2px solid #1f2a8f; padding: 14px 0 0 19px; display: grid; grid-template-columns: 266px 145px; grid-template-rows: 34px 36px 33px 32px 34px 27px; align-items: start; align-content: start; flex: none; }
.w3-box .lbl { margin-top: 6px; padding-left: 15px; }
.w3-box .box { height: 25px; }
.plain { background: #fff; height: 27px; display: flex; justify-content: space-between; align-items: center; }
.drop { width: 17px; height: 100%; background: #f0f0f0; color: #111; font: 9px "DejaVu Sans", sans-serif; display: flex; align-items: center; justify-content: center; flex: none; }
.plain-t { direction: rtl; color: #222; padding-right: 3px; }
.w40 { width: 40px; justify-self: end; }
.chk { display: flex; justify-content: flex-end; align-items: center; gap: 9px; height: 16px; }
.chk-t { direction: rtl; color: #2222d8; font-size: 12px; white-space: nowrap; }
.chk-b { width: 13px; height: 13px; flex: none; }
.w3-box .acct { height: 27px; align-items: stretch; overflow: hidden; }
.acct-t { flex: 1; min-width: 0; margin: 2px 1px 2px 3px; background: #0078d7; color: #fff; direction: rtl; white-space: nowrap; overflow: hidden; line-height: 21px; font-size: 12px; }
```
